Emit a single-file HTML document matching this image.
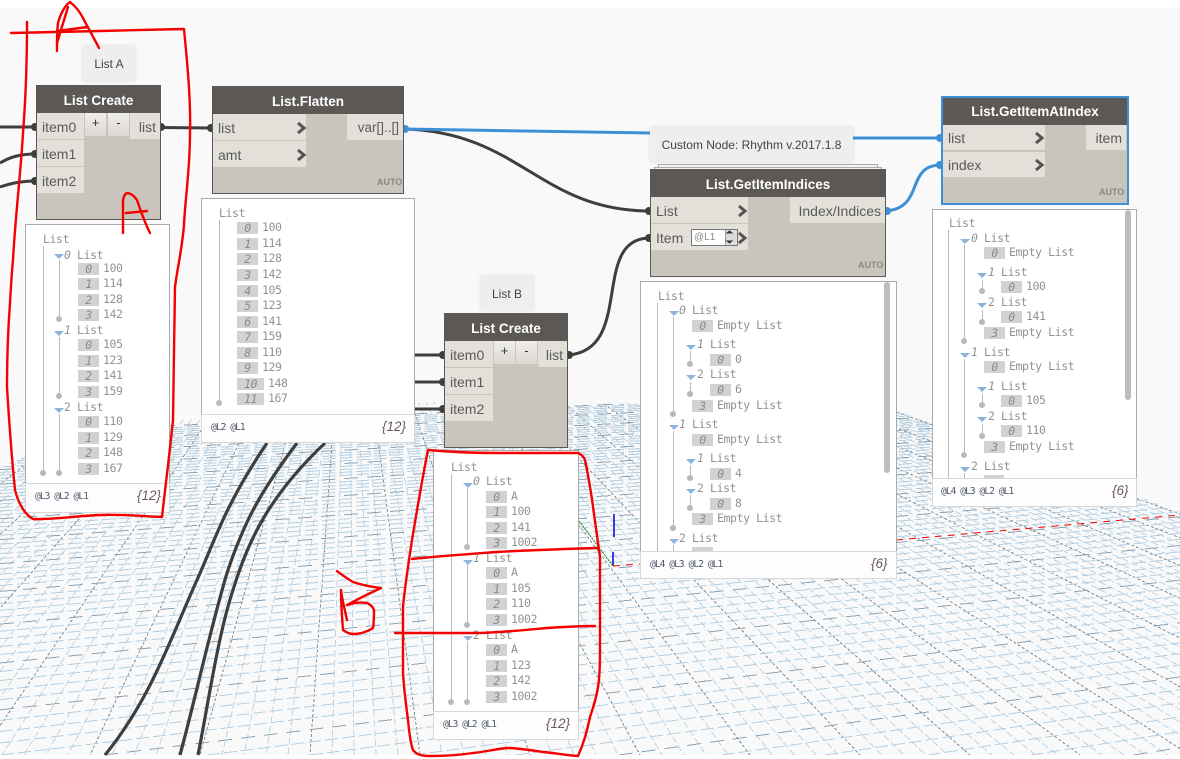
<!DOCTYPE html>
<html>
<head>
<meta charset="utf-8">
<title>Dynamo graph</title>
<style>
html,body{margin:0;padding:0;background:#fff}
html{overflow:hidden;height:759px}
body{position:relative;width:1180px;height:759px;overflow:hidden;font-family:"Liberation Sans",sans-serif}
#canvas{position:absolute;left:0;top:8px;width:1180px;height:747px;background:#f9f9f9}
svg{position:absolute;left:0;top:0}
.a{position:absolute;box-sizing:border-box}
.node{position:absolute;box-sizing:border-box;background:#c9c5bd;border:1px solid #5b5855}
.hd{position:absolute;box-sizing:border-box;background:#5b5855;color:#fff;font-weight:bold;font-size:13.5px;text-align:center;line-height:27px}
.r{position:absolute;box-sizing:border-box;background:#e3e0da;color:#5a5a5a;font-size:14px;line-height:28px;height:26px;padding-left:5px;white-space:pre}
.rr{padding-left:0;padding-right:4px;text-align:right}
.btn{position:absolute;box-sizing:border-box;background:linear-gradient(#efedea,#dcd9d3);color:#333;font-size:13px;line-height:20px;text-align:center}
.auto{position:absolute;font-size:9px;font-weight:bold;color:#8b8781;line-height:10px}
.note{position:absolute;box-sizing:border-box;background:#eee;color:#444;font-size:12px;text-align:center;box-shadow:0 0 4px rgba(0,0,0,.13);padding-top:1px}
.pv{position:absolute;box-sizing:border-box;background:#fff;border:1px solid #ababab}
.ft{position:absolute;box-sizing:border-box;background:#fdfdfd;border:1px solid #d8d8d8}
.lv{position:absolute;font:9.5px/12px "DejaVu Sans Mono",monospace;letter-spacing:-.9px;color:#4f5668;white-space:pre}
.ct{position:absolute;font:italic 13.5px/16px "Liberation Sans",sans-serif;color:#6c5a5e;white-space:pre}
.p{position:absolute;margin:0;font:11.5px/14px "DejaVu Sans Mono",monospace;letter-spacing:-.4px;color:#929292;white-space:pre}
.p i{display:inline-block;width:21px;height:12px;line-height:12px;background:#d2d2d2;text-align:center;font-style:italic;margin-right:4px;vertical-align:-1px;color:#8a8a8a}
.p i.w{width:27px}
.p em{font-style:italic}
.t{position:absolute;width:0;height:0;margin-left:-1px;border-left:5px solid transparent;border-right:5px solid transparent;border-top:5px solid #8fb4dc}
.v{position:absolute;width:1px;background:#b9b9b9}
.v.d:after{content:"";position:absolute;left:-3px;bottom:-3px;width:6px;height:6px;border-radius:50%;background:#b9b9b9}
.sb{position:absolute;width:6px;background:#bdbdbd;border-radius:3px}
</style>
</head>
<body>
<div id="canvas"></div>

<svg width="1180" height="759" viewBox="0 0 1180 759" id="bg">
<defs><clipPath id="gc"><polygon points="0,468 60,440 180,420 300,408 440,402 640,404 900,412 1140,497 1180,512 1180,755 0,755"/></clipPath></defs>
<g id="grid" clip-path="url(#gc)" fill="none" shape-rendering="crispEdges"></g>
<g fill="none" stroke-width="1.5">
<path d="M614 514V537M613 552V566" stroke="#0000e0"/>
<path d="M579 521L613 566" stroke="#0a7a0a" stroke-width="1" stroke-dasharray="2 1"/>
<path d="M613 566L640 564M896 540L1180 515" stroke="#f00000" stroke-width="1" stroke-dasharray="7 6"/>
</g>
<g fill="none" stroke="#3e3e3e" stroke-width="3">
<path d="M0 127H36"/>
<path d="M0 163C10 157 20 154 36 154"/>
<path d="M0 187C12 183 22 181 36 181"/>
<path d="M160 127.5L212 128"/>
<path d="M404 129C520 132 540 211 650 211"/>
<path d="M405 355H444M405 382H444M405 409H444"/>
<path d="M568 355C635 350 590 238 650 238"/>
<path d="M105 755C150 700 170 640 197 580C215 540 225 505 267 443" stroke-width="3.2"/>
<path d="M180 755C195 700 210 630 227 573C243 525 258 495 297 443" stroke-width="3.2"/>
<path d="M198 755C208 705 218 635 233 590C248 540 270 495 325 443" stroke-width="3.2"/>
</g>
<g fill="#3e3e3e">
<circle cx="35" cy="127" r="4"/><circle cx="35" cy="154" r="4"/><circle cx="35" cy="181" r="4"/>
<circle cx="161" cy="127" r="4"/><circle cx="211" cy="128" r="4"/>
<circle cx="443" cy="355" r="4"/><circle cx="443" cy="382" r="4"/><circle cx="443" cy="409" r="4"/>
<circle cx="569" cy="355" r="4"/><circle cx="649" cy="211" r="4"/><circle cx="649" cy="238" r="4"/>
</g>
<g fill="none" stroke="#3d8fd6" stroke-width="3">
<path d="M404 129L650 133M853 138H941"/>
<path d="M886 211C925 208 905 165 941 165"/>
</g>
<g fill="#3d8fd6">
<circle cx="405" cy="129" r="4"/><circle cx="887" cy="211" r="4"/><circle cx="940" cy="138" r="4"/><circle cx="940" cy="165" r="4"/>
</g>
</svg>

<!-- notes -->
<div class="note" style="left:83px;top:46px;width:52px;height:35px;line-height:35px">List A</div>
<div class="note" style="left:481px;top:276px;width:52px;height:34px;line-height:34px">List B</div>
<div class="note" style="left:650px;top:127px;width:203px;height:35px;line-height:35px">Custom Node: Rhythm v.2017.1.8</div>

<!-- List Create A -->
<div class="node" style="left:36px;top:85px;width:125px;height:135px"></div>
<div class="hd" style="left:36px;top:85px;width:125px;height:28px;line-height:31px">List Create</div>
<div class="r" style="left:37px;top:113px;width:47px">item0</div>
<div class="r" style="left:37px;top:140px;width:47px">item1</div>
<div class="r" style="left:37px;top:167px;width:47px">item2</div>
<div class="btn" style="left:85px;top:113px;width:21px;height:23px">+</div>
<div class="btn" style="left:108px;top:113px;width:21px;height:23px">-</div>
<div class="r rr" style="left:130px;top:113px;width:30px">list</div>

<!-- List.Flatten -->
<div class="node" style="left:212px;top:86px;width:192px;height:108px"></div>
<div class="hd" style="left:212px;top:86px;width:192px;height:28px;line-height:31px">List.Flatten</div>
<div class="r" style="left:213px;top:114px;width:93px">list</div>
<div class="r" style="left:213px;top:141px;width:93px">amt</div>
<div class="r rr" style="left:347px;top:114px;width:56px;font-size:13.5px">var[]..[]</div>
<div class="auto" style="left:377px;top:177px">AUTO</div>

<!-- List Create B -->
<div class="node" style="left:444px;top:313px;width:124px;height:135px"></div>
<div class="hd" style="left:444px;top:313px;width:124px;height:28px;line-height:31px">List Create</div>
<div class="r" style="left:445px;top:341px;width:48px">item0</div>
<div class="r" style="left:445px;top:368px;width:48px">item1</div>
<div class="r" style="left:445px;top:395px;width:48px">item2</div>
<div class="btn" style="left:494px;top:341px;width:21px;height:23px">+</div>
<div class="btn" style="left:516px;top:341px;width:21px;height:23px">-</div>
<div class="r rr" style="left:538px;top:341px;width:29px">list</div>

<!-- List.GetItemIndices -->
<div class="a" style="left:658px;top:164px;width:220px;height:8px;background:#f4f4f4;border:1px solid #aaa"></div>
<div class="a" style="left:654px;top:167px;width:228px;height:8px;background:#f4f4f4;border:1px solid #aaa"></div>
<div class="node" style="left:650px;top:169px;width:236px;height:108px"></div>
<div class="hd" style="left:650px;top:169px;width:236px;height:28px;line-height:31px">List.GetItemIndices</div>
<div class="r" style="left:651px;top:197px;width:97px">List</div>
<div class="r" style="left:651px;top:224px;width:97px">Item</div>
<div class="r rr" style="left:790px;top:197px;width:95px">Index/Indices</div>
<div class="a" style="left:691px;top:229px;width:47px;height:17px;background:#fff;border:1px solid #777;font:10px/15px 'Liberation Sans',sans-serif;color:#888;padding-left:2px">@L1</div>
<div class="a" style="left:725px;top:230px;width:12px;height:15px;background:#dcdcdc;border-left:1px solid #999"></div>
<div class="auto" style="left:858px;top:260px">AUTO</div>

<!-- List.GetItemAtIndex -->
<div class="node" style="left:941px;top:96px;width:188px;height:109px;border:2px solid #3d8fd6"></div>
<div class="hd" style="left:943px;top:98px;width:184px;height:27px;line-height:28px">List.GetItemAtIndex</div>
<div class="r" style="left:943px;top:125px;width:102px;height:25px;line-height:27px">list</div>
<div class="r" style="left:943px;top:152px;width:102px;height:25px;line-height:27px">index</div>
<div class="r rr" style="left:1086px;top:125px;width:40px;height:25px;line-height:27px">item</div>
<div class="auto" style="left:1099px;top:187px">AUTO</div>

<!-- Preview A -->
<div class="pv" style="left:25px;top:224px;width:145px;height:260px"></div>
<div class="p" style="left:43px;top:232px">List</div>
<div class="v d" style="left:43px;top:246px;height:227px"></div>
<div class="t" style="left:55px;top:254px"></div><div class="p" style="left:64px;top:248px"><em>0</em> List</div>
<div class="v d" style="left:59px;top:260px;height:59px"></div>
<div class="p" style="left:78px;top:261px"><i>0</i>100</div>
<div class="p" style="left:78px;top:276px"><i>1</i>114</div>
<div class="p" style="left:78px;top:292px"><i>2</i>128</div>
<div class="p" style="left:78px;top:307px"><i>3</i>142</div>
<div class="t" style="left:55px;top:331px"></div><div class="p" style="left:64px;top:323px"><em>1</em> List</div>
<div class="v d" style="left:59px;top:337px;height:59px"></div>
<div class="p" style="left:78px;top:337px"><i>0</i>105</div>
<div class="p" style="left:78px;top:353px"><i>1</i>123</div>
<div class="p" style="left:78px;top:368px"><i>2</i>141</div>
<div class="p" style="left:78px;top:384px"><i>3</i>159</div>
<div class="t" style="left:55px;top:408px"></div><div class="p" style="left:64px;top:400px">2 List</div>
<div class="v d" style="left:59px;top:414px;height:59px"></div>
<div class="p" style="left:78px;top:414px"><i>0</i>110</div>
<div class="p" style="left:78px;top:430px"><i>1</i>129</div>
<div class="p" style="left:78px;top:445px"><i>2</i>148</div>
<div class="p" style="left:78px;top:461px"><i>3</i>167</div>
<div class="ft" style="left:25px;top:483px;width:145px;height:30px"></div>
<div class="lv" style="left:35px;top:491px">@L3 @L2 @L1</div>
<div class="ct" style="left:137px;top:488px">{12}</div>

<!-- Preview Flatten -->
<div class="pv" style="left:201px;top:198px;width:214px;height:217px"></div>
<div class="p" style="left:219px;top:206px">List</div>
<div class="v d" style="left:219px;top:220px;height:183px"></div>
<div class="p" style="left:237px;top:220px"><i>0</i>100</div>
<div class="p" style="left:237px;top:236px"><i>1</i>114</div>
<div class="p" style="left:237px;top:251px"><i>2</i>128</div>
<div class="p" style="left:237px;top:267px"><i>3</i>142</div>
<div class="p" style="left:237px;top:283px"><i>4</i>105</div>
<div class="p" style="left:237px;top:298px"><i>5</i>123</div>
<div class="p" style="left:237px;top:314px"><i>6</i>141</div>
<div class="p" style="left:237px;top:329px"><i>7</i>159</div>
<div class="p" style="left:237px;top:345px"><i>8</i>110</div>
<div class="p" style="left:237px;top:360px"><i>9</i>129</div>
<div class="p" style="left:237px;top:376px"><i class="w">10</i>148</div>
<div class="p" style="left:237px;top:391px"><i class="w">11</i>167</div>
<div class="ft" style="left:201px;top:414px;width:214px;height:29px"></div>
<div class="lv" style="left:211px;top:422px">@L2 @L1</div>
<div class="ct" style="left:382px;top:419px">{12}</div>

<!-- Preview B -->
<div class="pv" style="left:433px;top:450px;width:146px;height:262px"></div>
<div class="p" style="left:451px;top:460px">List</div>
<div class="v d" style="left:451px;top:474px;height:228px"></div>
<div class="t" style="left:464px;top:483px"></div><div class="p" style="left:473px;top:474px"><em>0</em> List</div>
<div class="v d" style="left:467px;top:488px;height:59px"></div>
<div class="p" style="left:486px;top:489px"><i>0</i>A</div>
<div class="p" style="left:486px;top:504px"><i>1</i>100</div>
<div class="p" style="left:486px;top:520px"><i>2</i>141</div>
<div class="p" style="left:486px;top:535px"><i>3</i>1002</div>
<div class="t" style="left:464px;top:560px"></div><div class="p" style="left:473px;top:551px"><em>1</em> List</div>
<div class="v d" style="left:467px;top:565px;height:60px"></div>
<div class="p" style="left:486px;top:565px"><i>0</i>A</div>
<div class="p" style="left:486px;top:581px"><i>1</i>105</div>
<div class="p" style="left:486px;top:596px"><i>2</i>110</div>
<div class="p" style="left:486px;top:612px"><i>3</i>1002</div>
<div class="t" style="left:464px;top:636px"></div><div class="p" style="left:473px;top:628px">2 List</div>
<div class="v d" style="left:467px;top:642px;height:60px"></div>
<div class="p" style="left:486px;top:642px"><i>0</i>A</div>
<div class="p" style="left:486px;top:658px"><i>1</i>123</div>
<div class="p" style="left:486px;top:673px"><i>2</i>142</div>
<div class="p" style="left:486px;top:689px"><i>3</i>1002</div>
<div class="ft" style="left:433px;top:711px;width:146px;height:29px"></div>
<div class="lv" style="left:443px;top:719px">@L3 @L2 @L1</div>
<div class="ct" style="left:546px;top:716px">{12}</div>

<!-- Preview Indices -->
<div class="pv" style="left:640px;top:281px;width:257px;height:271px"></div>
<div class="sb" style="left:884px;top:282px;height:191px"></div>
<div class="p" style="left:658px;top:289px">List</div>
<div class="v" style="left:657px;top:303px;height:248px"></div>
<div class="t" style="left:670px;top:311px"></div><div class="p" style="left:679px;top:303px"><em>0</em> List</div>
<div class="v d" style="left:673px;top:317px;height:97px"></div>
<div class="p" style="left:692px;top:318px"><i>0</i>Empty List</div>
<div class="t" style="left:687px;top:345px"></div><div class="p" style="left:697px;top:337px"><em>1</em> List</div>
<div class="v d" style="left:690px;top:351px;height:13px"></div>
<div class="p" style="left:710px;top:352px"><i>0</i>0</div>
<div class="t" style="left:687px;top:375px"></div><div class="p" style="left:697px;top:367px">2 List</div>
<div class="v d" style="left:690px;top:382px;height:12px"></div>
<div class="p" style="left:710px;top:382px"><i>0</i>6</div>
<div class="p" style="left:692px;top:398px"><i>3</i>Empty List</div>
<div class="t" style="left:670px;top:425px"></div><div class="p" style="left:679px;top:417px"><em>1</em> List</div>
<div class="v d" style="left:673px;top:431px;height:97px"></div>
<div class="p" style="left:692px;top:432px"><i>0</i>Empty List</div>
<div class="t" style="left:687px;top:459px"></div><div class="p" style="left:697px;top:451px"><em>1</em> List</div>
<div class="v d" style="left:690px;top:465px;height:13px"></div>
<div class="p" style="left:710px;top:466px"><i>0</i>4</div>
<div class="t" style="left:687px;top:489px"></div><div class="p" style="left:697px;top:481px">2 List</div>
<div class="v d" style="left:690px;top:495px;height:13px"></div>
<div class="p" style="left:710px;top:496px"><i>0</i>8</div>
<div class="p" style="left:692px;top:511px"><i>3</i>Empty List</div>
<div class="t" style="left:670px;top:539px"></div><div class="p" style="left:679px;top:531px">2 List</div>
<div class="v" style="left:673px;top:545px;height:6px"></div>
<div class="a" style="left:692px;top:547px;width:21px;height:4px;background:#d2d2d2"></div>
<div class="ft" style="left:640px;top:551px;width:257px;height:28px"></div>
<div class="lv" style="left:650px;top:559px">@L4 @L3 @L2 @L1</div>
<div class="ct" style="left:871px;top:556px">{6}</div>

<!-- Preview AtIndex -->
<div class="pv" style="left:932px;top:209px;width:205px;height:270px"></div>
<div class="sb" style="left:1125px;top:210px;height:190px"></div>
<div class="p" style="left:949px;top:216px">List</div>
<div class="v" style="left:948px;top:230px;height:248px"></div>
<div class="t" style="left:961px;top:239px"></div><div class="p" style="left:971px;top:231px"><em>0</em> List</div>
<div class="v d" style="left:964px;top:245px;height:96px"></div>
<div class="p" style="left:984px;top:245px"><i>0</i>Empty List</div>
<div class="t" style="left:978px;top:273px"></div><div class="p" style="left:988px;top:265px"><em>1</em> List</div>
<div class="v d" style="left:982px;top:280px;height:11px"></div>
<div class="p" style="left:1001px;top:279px"><i>0</i>100</div>
<div class="t" style="left:978px;top:303px"></div><div class="p" style="left:988px;top:295px">2 List</div>
<div class="v d" style="left:982px;top:310px;height:12px"></div>
<div class="p" style="left:1001px;top:309px"><i>0</i>141</div>
<div class="p" style="left:984px;top:325px"><i>3</i>Empty List</div>
<div class="t" style="left:961px;top:353px"></div><div class="p" style="left:971px;top:345px"><em>1</em> List</div>
<div class="v d" style="left:964px;top:359px;height:96px"></div>
<div class="p" style="left:984px;top:359px"><i>0</i>Empty List</div>
<div class="t" style="left:978px;top:387px"></div><div class="p" style="left:988px;top:379px"><em>1</em> List</div>
<div class="v d" style="left:982px;top:394px;height:11px"></div>
<div class="p" style="left:1001px;top:393px"><i>0</i>105</div>
<div class="t" style="left:978px;top:417px"></div><div class="p" style="left:988px;top:409px">2 List</div>
<div class="v d" style="left:982px;top:424px;height:12px"></div>
<div class="p" style="left:1001px;top:423px"><i>0</i>110</div>
<div class="p" style="left:984px;top:439px"><i>3</i>Empty List</div>
<div class="t" style="left:961px;top:467px"></div><div class="p" style="left:971px;top:459px">2 List</div>
<div class="v" style="left:964px;top:473px;height:5px"></div>
<div class="a" style="left:984px;top:475px;width:20px;height:3px;background:#d2d2d2"></div>
<div class="ft" style="left:932px;top:478px;width:205px;height:29px"></div>
<div class="lv" style="left:941px;top:486px">@L4 @L3 @L2 @L1</div>
<div class="ct" style="left:1112px;top:483px">{6}</div>

<!-- chevrons and red annotations -->
<svg width="1180" height="759" viewBox="0 0 1180 759" style="pointer-events:none">
<g fill="none" stroke="#55524f" stroke-width="3">
<path d="M298 123L304 128L298 133"/><path d="M298 150L304 155L298 160"/>
<path d="M739 206L745 211L739 216"/><path d="M739 233L745 238L739 243"/>
<path d="M1036 133L1042 138L1036 143"/><path d="M1036 160L1042 165L1036 170"/>
</g>
<path d="M727 233L732 233L729.5 231ZM727 241L732 241L729.5 243Z" fill="#333" stroke="#333"/>
<g fill="none" stroke="#f40000" stroke-width="2.4" stroke-linejoin="round" stroke-linecap="round">
<path d="M11 33L100 31L184 29C187 60 191 100 190 133C190 170 185 200 184 225C182 250 177 270 175 287C174 330 174 380 173 420C170 450 165 490 162 517C140 516 120 514 100 515C75 516 50 520 33 519C24 514 18 502 15 490C11 450 9 420 7 387C7 360 8 330 10 303C11 285 12 270 13 260C15 220 21 170 23 133C26 95 27 50 27 22"/>
<path d="M57 51C57 40 57 30 58 23C60 15 65 5 70 2C75 6 80 12 83 18C88 28 94 38 99 48"/>
<path d="M57 31L88 27M57 43L68 7"/>
<path d="M123 233L123 200C124 195 126 193 128 193C132 194 135 197 137 200C141 212 145 223 150 233"/>
<path d="M126 213L147 211"/>
<path d="M428 450C450 452 475 453 497 453L578 453C581 454 584 457 585 460C588 475 591 490 593 507L600 557L600 640C600 660 600 675 598 687C596 700 593 708 590 717C587 732 583 745 578 756C565 755 555 753 543 752C530 750 518 748 507 748C495 749 485 752 473 753C460 755 445 756 430 756C422 756 417 755 413 750C410 742 409 730 408 720C406 705 404 690 403 673L403 607C405 585 409 560 412 540C417 510 422 480 428 450Z"/>
<path d="M412 559C440 556 470 554 497 552C530 550 565 549 597 548"/>
<path d="M395 633L480 633C505 632 525 630 547 628C563 627 580 626 595 626"/>
<path d="M337 571C342 575 348 579 353 582C362 585 372 587 381 588C370 593 358 599 347 605C353 603 360 602 367 603C370 604 373 607 374 610C374 616 374 622 373 628C367 632 360 634 353 634C349 634 346 632 343 630C342 617 341 603 341 590C342 600 345 610 347 620"/>
</g>
</svg>

<script>
(function(){
  var g=document.getElementById('grid'),NS='http://www.w3.org/2000/svg';
  var vx1=348,vy=215,vx2=4500;
  function line(x1,y1,x2,y2,c,w,d){
    var l=document.createElementNS(NS,'line');
    l.setAttribute('x1',x1.toFixed(1));l.setAttribute('y1',y1.toFixed(1));
    l.setAttribute('x2',x2.toFixed(1));l.setAttribute('y2',y2.toFixed(1));
    l.setAttribute('stroke',c);l.setAttribute('stroke-width',w);
    if(d)l.setAttribute('stroke-dasharray',d);
    g.appendChild(l);
  }
  var i,k,X,d,Y0,Y1;
  for(i=-170;i<=140;i++){
    X=90+22*i;
    var maj=(i%5===0);
    var topx=vx1+(X-vx1)*(380-vy)/540;
    if((topx<0&&X<0)||(topx>1180&&X>1180))continue;
    var ex=X,ey=755;
    if(X>1180){ey=380+(1180-topx)/(X-topx)*375;ex=1180;}
    if(X<0){ey=380+(0-topx)/(X-topx)*375;ex=0;}
    line(topx,380,ex,ey,maj?'#7f8d98':'#bcd5e6',1,maj?'3 2':'7 3');
  }
  for(k=-16;k<=60;k++){
    d=1/(0.00248+k*0.000052);
    if(d<=0)continue;
    Y0=vy+d*(vx2)/(vx2-833);
    Y1=vy+d*(vx2-1180)/(vx2-833);
    if(Y1>755)continue;
    var sx=0,sy=Y0;
    if(Y0>755){sx=(Y0-755)/(Y0-Y1)*1180;sy=755;}
    var mj=(k%5===0);
    line(sx,sy,1180,Y1,mj?'#8ea3b3':'#b5d0e2',1,mj?'14 9':'13 4');
  }
})();
</script>
</body>
</html>
